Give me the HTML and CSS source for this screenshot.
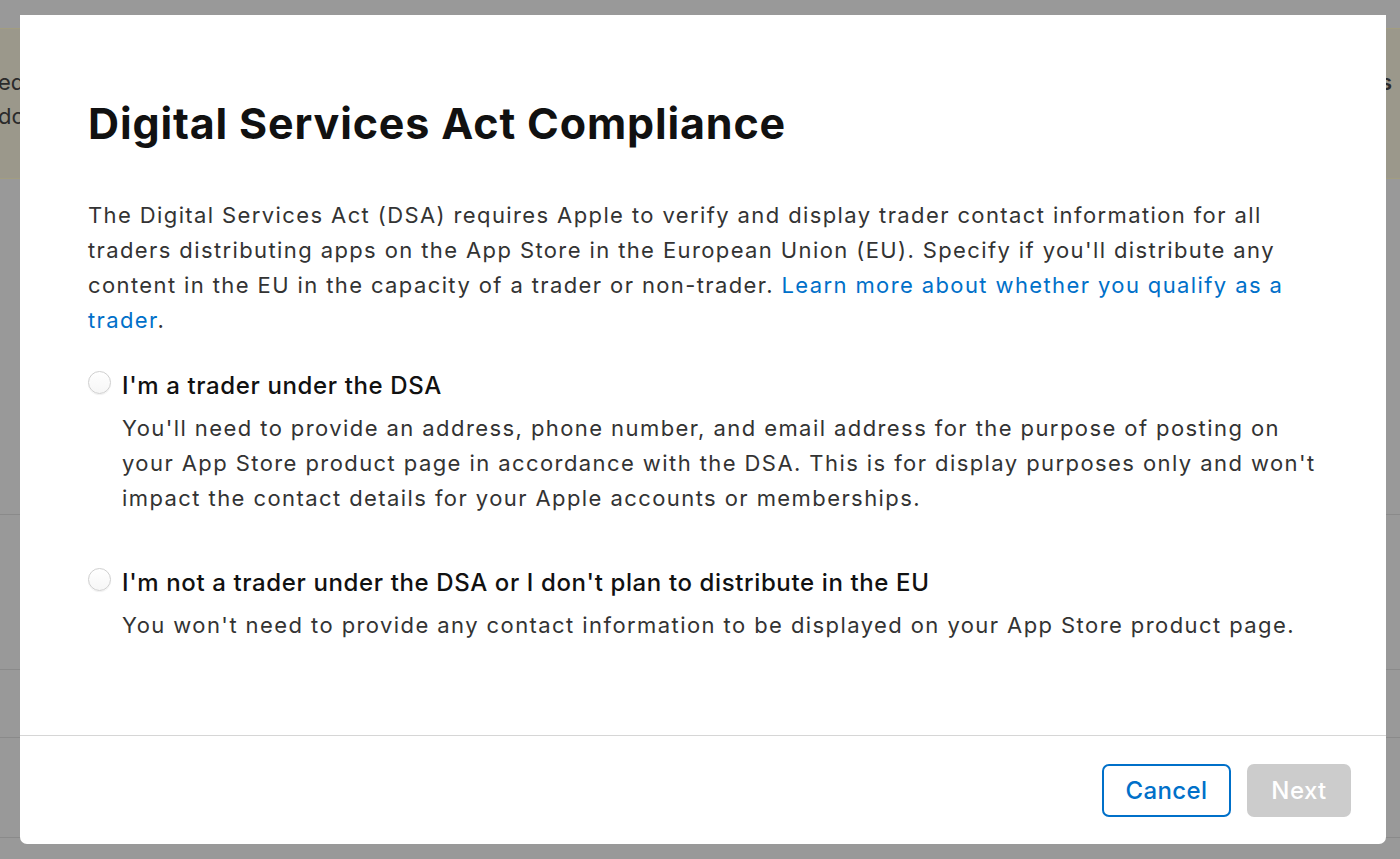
FILE: index.html
```html
<!DOCTYPE html>
<html lang="en">
<head>
<meta charset="utf-8">
<title>Digital Services Act Compliance</title>
<link rel="stylesheet" href="styles.css">
</head>
<body>
<div class="page">
  <div class="banner">
    <div class="banner-left"><span>ed</span><span>do</span></div>
    <div class="banner-right"><span>s</span></div>
  </div>
  <div class="rows">
    <div class="row r1"></div>
    <div class="row r2"></div>
    <div class="row r3"></div>
    <div class="row r4"></div>
  </div>
</div>

<div class="modal" role="dialog" aria-labelledby="dlg-title">
  <div class="modal-body">
    <h1 id="dlg-title" class="title">Digital Services Act Compliance</h1>
    <p class="intro">The Digital Services Act (DSA) requires Apple to verify and display trader contact information for all traders distributing apps on the App Store in the European Union (EU). Specify if you'll distribute any content in the EU in the capacity of a trader or non-trader. <a href="#" class="link">Learn more about whether you qualify as a trader</a>.</p>

    <div class="option">
      <div class="option-head">
        <span class="radio"></span>
        <span class="option-label">I'm a trader under the DSA</span>
      </div>
      <p class="option-desc">You'll need to provide an address, phone number, and email address for the purpose of posting on your App Store product page in accordance with the DSA. This is for display purposes only and won't impact the contact details for your Apple accounts or memberships.</p>
    </div>

    <div class="option">
      <div class="option-head">
        <span class="radio"></span>
        <span class="option-label">I'm not a trader under the DSA or I don't plan to distribute in the EU</span>
      </div>
      <p class="option-desc">You won't need to provide any contact information to be displayed on your App Store product page.</p>
    </div>
  </div>
  <div class="modal-footer">
    <button class="btn btn-cancel" type="button">Cancel</button>
    <button class="btn btn-next" type="button" disabled>Next</button>
  </div>
</div>
</body>
</html>
```

FILE: styles.css
```css
* { box-sizing: border-box; }

html, body {
  margin: 0;
  padding: 0;
  height: 100%;
}

body {
  background: #999999;
  font-family: Inter, "Noto Sans", "Liberation Sans", sans-serif;
  overflow: hidden;
}

/* dimmed background page */
.page {
  padding-top: 28px;
}

.banner {
  height: 151px;
  background: #9b988b;
  border-top: 1px solid #a29d80;
  border-bottom: 1px solid #a29d80;
  display: flex;
  justify-content: space-between;
  padding-top: 36px;
  font-size: 22px;
  line-height: 34px;
  color: #2b2b2b;
}

.banner-left {
  display: flex;
  flex-direction: column;
  margin-left: -2px;
}

.banner-right {
  margin-right: 8px;
  font-weight: 600;
}

.rows {
  display: flex;
  flex-direction: column;
}

.row {
  border-bottom: 1px solid #8a8a8a;
}
.r1 { height: 336px; }
.r2 { height: 155px; }
.r3 { height: 68px; }
.r4 { height: 100px; }

/* modal */
.modal {
  position: fixed;
  left: 20px;
  top: 15px;
  width: 1366px;
  height: 829px;
  background: #ffffff;
  border-radius: 0 0 7px 7px;
  display: flex;
  flex-direction: column;
}

.modal-body {
  flex: 1;
  padding: 82px 68px 0 68px;
}

.title {
  margin: 0;
  font-size: 43px;
  line-height: 52px;
  font-weight: 700;
  color: #111111;
  letter-spacing: 0.85px;
}

.intro {
  margin: 49px 0 0 0;
  font-size: 22px;
  line-height: 35px;
  color: #333333;
  letter-spacing: 1.39px;
}

.link {
  color: #0070c9;
  text-decoration: none;
}

.option {
  margin-top: 30px;
}

.option + .option {
  margin-top: 49px;
}

.option-head {
  display: flex;
  align-items: flex-start;
  gap: 11px;
}

.radio {
  flex: none;
  width: 23px;
  height: 23px;
  margin-top: 3px;
  border-radius: 50%;
  border: 1px solid #cfcfcf;
  background: linear-gradient(#ffffff, #f6f6f6);
  box-shadow: 0 1px 1px rgba(0, 0, 0, 0.06);
}

.option-label {
  font-size: 24px;
  line-height: 35px;
  font-weight: 500;
  color: #111111;
  letter-spacing: 0.62px;
}

.option-desc {
  margin: 8px 0 0 34px;
  font-size: 22px;
  line-height: 35px;
  color: #333333;
  letter-spacing: 1.42px;
}

.modal-footer {
  border-top: 1px solid #d6d6d6;
  display: flex;
  justify-content: flex-end;
  gap: 16px;
  padding: 28px 35px 27px 0;
}

.btn {
  height: 53px;
  padding: 0 20px;
  border-radius: 7px;
  font-family: inherit;
  font-size: 24px;
  font-weight: 500;
  letter-spacing: 0.4px;
}

.btn-cancel {
  background: #ffffff;
  border: 2px solid #0070c9;
  color: #0070c9;
  width: 129px;
}

.btn-next {
  background: #cccccc;
  border: none;
  color: #ffffff;
  width: 104px;
}
```
